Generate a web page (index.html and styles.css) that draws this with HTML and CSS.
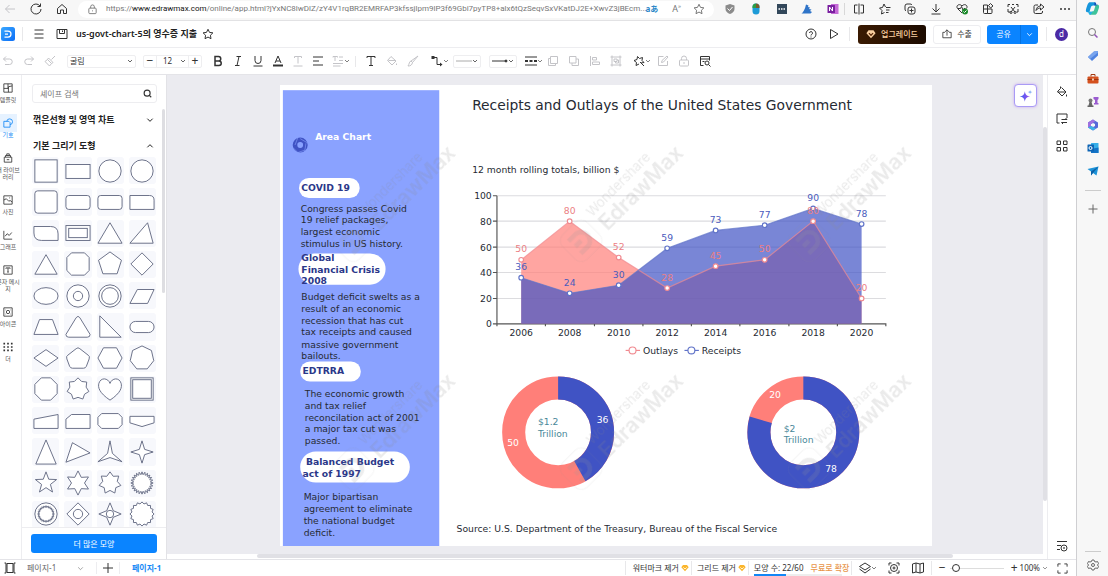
FILE: index.html
```html
<!DOCTYPE html>
<html lang="ko">
<head>
<meta charset="utf-8">
<title>EdrawMax Online</title>
<link rel="stylesheet" href="styles.css">
</head>
<body>
<svg class="sprite" aria-hidden="true">
  <symbol id="down" viewBox="0 0 24 24"><path d="M4 8l8 8 8-8"/></symbol>
  <symbol id="star" viewBox="0 0 24 24"><path d="M12 2.5l3 6.3 6.8.9-5 4.8 1.2 6.9-6-3.3-6 3.3 1.200-6.900-5-4.800 6.800-.9z"/></symbol>
  <symbol id="gem" viewBox="0 0 24 24"><path class="gem-body" d="M6 3h12l5 7-11 12L1 10z"/><path class="gem-mark" d="M7 10l5 5 5-5"/></symbol>
  <symbol id="brush" viewBox="0 0 24 24"><path d="M22 2L11 15l-3-3zM2 22c5 0 8-2 9-7l-3-3c-4 1-3 6-6 10z"/></symbol>
  <symbol id="watermark" viewBox="-50 -50 300 100" overflow="visible">
    <rect class="wm-frame" x="-30" y="-30" width="60" height="60" rx="15"/>
    <path class="wm-logo" d="M-16-15H0a15 15 0 0 1 0 30h-16M-14 0H0"/>
    <text class="wm-small" x="42" y="-15">Wondershare</text>
    <text class="wm-big" x="44" y="21">EdrawMax</text>
  </symbol>
</svg>

<div class="window">
  <header class="browser">
    <nav class="browser-nav">
      <button class="icon faded" aria-label="Back"><svg viewBox="0 0 24 24"><path d="M22 12H3m8-8l-8 8 8 8"/></svg></button>
      <button class="icon" aria-label="Reload"><svg viewBox="0 0 24 24"><path d="M20 6a10 10 0 1 0 2 6M21 1v6h-6"/></svg></button>
      <button class="icon" aria-label="Home"><svg viewBox="0 0 24 24"><path d="M3 11l9-8 9 8v10h-6v-7H9v7H3z"/></svg></button>
    </nav>
    <div class="address">
      <svg viewBox="0 0 24 24"><rect x="4" y="9" width="16" height="12" rx="2"/><path d="M8 9V6a4 4 0 0 1 8 0v3M12 14v2"/></svg>
      <span class="url">https://<b>www.edrawmax.com</b>/online/app.html?jYxNC8lwDlZ/zY4V1rqBR2EMRFAP3kfssjlpm9lP3f69Gbi7pyTP8+alx6tQzSeqvSxVKatDJ2E+XwvZ3jBEcm...</span>
      <span class="translate">aあ</span>
      <span class="reader">A<sup>»</sup></span>
      <button class="icon soft" aria-label="Favorite"><svg><use href="#star"/></svg></button>
    </div>
    <div class="extensions">
      <svg viewBox="0 0 24 24"><path d="M12 2l9 3v7c0 5-4 8-9 10-5-2-9-5-9-10V5z" fill="#8b8b8b" stroke="none"/><path d="M7 11l4 4 6-7" stroke="#fff"/></svg>
      <svg viewBox="0 0 24 24"><rect x="5" y="1" width="14" height="22" rx="7" fill="#1d9bd7" stroke="none"/><path d="M5 10V8a7 7 0 0 1 7-7v9z" fill="#2a9e45" stroke="none"/><path d="M12 1a7 7 0 0 1 7 7v2h-7z" fill="#7b5a2c" stroke="none"/></svg>
      <svg viewBox="0 0 24 24"><rect x="2" y="2" width="20" height="20" fill="#32475a" stroke="none"/><path d="M5 12h14" stroke="#fff" stroke-width="3" stroke-dasharray="3 2"/></svg>
      <svg viewBox="0 0 24 24"><path d="M1 21c3-2 7-8 9-18l5 2-1 3 4 1-2 3 5 1-3 3 4 2-3 3z" fill="#2f74c8" stroke="none"/></svg>
      <svg viewBox="0 0 24 24"><rect x="8" y="2" width="15" height="20" fill="#c56ad6" stroke="none"/><rect x="1" y="4" width="15" height="16" rx="1" fill="#7a1fa0" stroke="none"/><path d="M5 16V8l6 8V8" stroke="#fff"/></svg>
      <svg class="after-rule" viewBox="0 0 24 24"><path d="M9 4H3v16h6M15 4h6v16h-6M12 1v22"/></svg>
      <svg viewBox="0 0 24 24"><path d="M13 8L10 2 7 9l-6 1 5 5-1 7 6-3M14 9h9M14 14h7M14 19h5"/></svg>
      <svg viewBox="0 0 24 24"><rect x="8" y="8" width="14" height="14" rx="4"/><path d="M15 11v8M11 15h8M4 16a4 4 0 0 1-2-4V6a4 4 0 0 1 4-4h6a4 4 0 0 1 4 2"/></svg>
      <svg viewBox="0 0 24 24"><path d="M12 2v15m-7-6l7 7 7-7M3 22h18"/></svg>
      <svg viewBox="0 0 24 24"><path d="M12 20L3 11C-1 5 7 0 12 6c5-6 13-1 9 5M4 11h5l2-4 3 7 2-3h3"/><circle cx="18" cy="17" r="6" fill="#1c8a2b" stroke="none"/><path d="M15 17l2 2 4-4" stroke="#fff"/></svg>
      <svg viewBox="0 0 24 24"><path d="M3 4h8v17H5a2 2 0 0 1-2-2zM3 12h17v7a2 2 0 0 1-2 2h-7M17 1l5 5-5 4-4-5z"/></svg>
      <svg viewBox="0 0 24 24"><path d="M6 3H2v5M10 3h4M18 3h4v5M2 12v6h5M22 12v6h-3M8 8l8 10M16 8L8 18"/><circle cx="8" cy="19" r="2"/><circle cx="16" cy="19" r="2"/></svg>
      <svg viewBox="0 0 24 24"><path d="M10 4H5a3 3 0 0 0-3 3v11a3 3 0 0 0 3 3h11a3 3 0 0 0 3-3v-2M15 2l7 6-7 6v-4c-4 0-6 1-9 5 1-6 4-9 9-9z"/></svg>
      <svg viewBox="0 0 24 24"><g fill="#333" stroke="none"><circle cx="4" cy="12" r="2"/><circle cx="12" cy="12" r="2"/><circle cx="20" cy="12" r="2"/></g></svg>
    </div>
  </header>

  <div class="app">
    <header class="titlebar">
      <svg class="logo" viewBox="0 0 28 28"><defs><linearGradient id="lg" x1="0" x2="1" y1="0" y2="1"><stop stop-color="#3aa8ff"/><stop offset="1" stop-color="#0b6df6"/></linearGradient></defs><rect width="28" height="28" rx="5" fill="url(#lg)"/><path d="M7 8h7a6 6 0 0 1 0 12H7M8 14h6" fill="none" stroke="#fff" stroke-width="2.500"/></svg>
      <i class="rule"></i>
      <button class="icon" aria-label="Menu"><svg viewBox="0 0 24 24"><path d="M3 4h18M3 12h18M3 20h18"/></svg></button>
      <button class="icon" aria-label="Save"><svg viewBox="0 0 24 24"><path d="M2 3h20v18H2zM7 3v8h10V3M13 5v3"/></svg></button>
      <h1>us-govt-chart-5의 영수증 지출</h1>
      <button class="icon" aria-label="Star"><svg><use href="#star"/></svg></button>
      <div class="title-actions">
        <button class="icon" aria-label="Help"><svg viewBox="0 0 24 24"><circle cx="12" cy="12" r="10"/><path d="M9 10a3 3 0 1 1 4 3c-1 0-1 1-1 2M12 17v2"/></svg></button>
        <button class="icon" aria-label="Present"><svg viewBox="0 0 24 24"><path d="M5 3l15 9-15 9z"/></svg></button>
        <i class="rule"></i>
        <button class="btn upgrade"><svg><use href="#gem"/></svg>업그레이드</button>
        <button class="btn export"><svg viewBox="0 0 24 24"><path d="M7 8H2v13h20V8h-5M12 16V2M7 7l5-5 5 5"/></svg>수출</button>
        <div class="share"><button>공유</button><button aria-label="Share options"><svg><use href="#down"/></svg></button></div>
        <i class="rule"></i>
        <button class="avatar">d</button>
      </div>
    </header>

    <div class="toolbar">
      <div class="tools history">
        <button class="icon faded" aria-label="Undo"><svg viewBox="0 0 24 24"><path d="M8 3L3 8l5 5M3 8h12a5 5 0 0 1 0 11H6"/></svg></button>
        <button class="icon faded" aria-label="Redo"><svg viewBox="0 0 24 24"><path d="M16 3l5 5-5 5M21 8H9a5 5 0 0 0 0 11h9"/></svg></button>
        <button class="icon faded" aria-label="Format painter"><svg viewBox="0 0 24 24"><path d="M22 2l-7 7M9 6l9 9-3 2-8-8zM7 9l-5 4 9 9 4-5"/></svg></button>
      </div>
      <label class="field font"><select aria-label="Font"><option>굴림</option></select><svg><use href="#down"/></svg></label>
      <div class="field size"><button aria-label="Smaller">−</button><label><select aria-label="Font size"><option>12</option></select><svg><use href="#down"/></svg></label><button aria-label="Larger">+</button></div>
      <div class="tools text">
        <button class="icon" aria-label="Bold"><svg viewBox="0 0 24 24"><path d="M6 3h7a4 4 0 0 1 0 9H6zM6 12h8a4 4 0 0 1 0 9H6z" stroke-width="3"/></svg></button>
        <button class="icon" aria-label="Italic"><svg viewBox="0 0 24 24"><path d="M9 3h9M6 21h9M14 3l-4 18"/></svg></button>
        <button class="icon" aria-label="Underline"><svg viewBox="0 0 24 24"><path d="M6 2v9a6 6 0 0 0 12 0V2M3 22h18"/></svg></button>
        <button class="icon" aria-label="Text colour"><svg viewBox="0 0 24 24"><path d="M6 16l6-14 6 14M8 12h8"/><path d="M2 21h20" stroke-width="4"/></svg></button>
        <button class="icon faded" aria-label="Text case"><svg viewBox="0 0 24 24"><path d="M5 6V3h14v3M12 3v14M3 22h18"/></svg></button>
        <button class="icon" aria-label="Align"><svg viewBox="0 0 24 24"><path d="M2 4h20M2 12h12M2 20h20"/></svg></button>
        <button class="icon faded drop" aria-label="Line spacing"><svg viewBox="0 0 24 24"><path d="M2 5V3h9v2M6 3v9M14 4h8M14 11h8M2 17h20M2 22h15"/></svg><svg class="chev"><use href="#down"/></svg></button>
      </div>
      <i class="rule"></i>
      <div class="tools style">
        <button class="icon" aria-label="Text"><svg viewBox="0 0 24 24"><path d="M4 6V3h16v3M12 3v18M8 21h8"/></svg></button>
        <button class="icon faded" aria-label="Fill"><svg viewBox="0 0 24 24"><path d="M10 3l10 9-8 8-9-9zM5 11h14M21 17v3"/></svg></button>
        <button class="icon faded" aria-label="Line colour"><svg><use href="#brush"/></svg></button>
        <button class="icon drop connector" aria-label="Connector"><svg viewBox="0 0 24 24"><path d="M4 5h8v14h9"/><path d="M1 2h6v6H1zM18 15l5 4-5 4z" fill="currentColor" stroke="none"/></svg><svg class="chev"><use href="#down"/></svg></button>
        <button class="field line" aria-label="Line type"><svg viewBox="0 0 32 24"><path d="M0 12h32" stroke="#aaa"/></svg><svg class="chev"><use href="#down"/></svg></button>
        <button class="field line" aria-label="Arrow type"><svg viewBox="0 0 32 24"><path d="M0 12h28"/><circle cx="28" cy="12" r="2" fill="currentColor"/></svg><svg class="chev"><use href="#down"/></svg></button>
        <button class="icon drop" aria-label="Line weight"><svg viewBox="0 0 24 24"><path d="M0 4h24M0 20h24"/><path d="M0 12h24" stroke-width="4" stroke-dasharray="6 3"/></svg><svg class="chev"><use href="#down"/></svg></button>
      </div>
      <div class="tools arrange">
        <button class="icon faded" aria-label="Bring forward"><svg viewBox="0 0 24 24"><path d="M7 3h14v14H7zM7 7H3v14h14v-4"/></svg></button>
        <button class="icon faded" aria-label="Send backward"><svg viewBox="0 0 24 24"><path d="M3 3h13v13H3zM8 16v5h13V8h-5"/></svg></button>
        <button class="icon faded" aria-label="Align shapes"><svg viewBox="0 0 24 24"><path d="M3 2v20M7 5h8v5H7zM7 14h14v5H7z"/></svg></button>
        <button class="icon faded" aria-label="Group"><svg viewBox="0 0 24 24"><path d="M4 4h16v16H4zM8 8h6v5H8zM11 13v3h6v-6h-3M1 4h3V1M20 1v3h3M1 20h3v3M20 23v-3h3"/></svg></button>
        <button class="icon drop" aria-label="Effects"><svg viewBox="0 0 24 24"><path d="M9 3l4 4 6-2-1 6 4 4-6 1M9 3L8 9l-6 2 5 4-1 6 6-3M14 14l8 8"/></svg><svg class="chev"><use href="#down"/></svg></button>
        <button class="icon faded" aria-label="Edit"><svg viewBox="0 0 24 24"><path d="M13 3H3v18h18v-9M9 15l1-4 10-9 2 2-9 10z"/></svg></button>
        <button class="icon faded" aria-label="Lock"><svg viewBox="0 0 24 24"><rect x="3" y="10" width="18" height="12" rx="2"/><path d="M7 10V7a5 5 0 0 1 10 0v3M12 14v4"/></svg></button>
        <button class="icon" aria-label="Find"><svg viewBox="0 0 24 24"><path d="M9 21H3V3h18v8M3 8h18M7 13h4"/><circle cx="16" cy="16" r="4"/><path d="M19 19l4 4"/></svg></button>
      </div>
    </div>

    <div class="workspace">
      <nav class="rail">
        <button><svg viewBox="0 0 24 24"><path d="M2 2h20v20H2zM2 13h11M13 22V9l9-2M12 2v11"/></svg><span>템플릿</span></button>
        <button class="active"><svg viewBox="0 0 24 24"><path d="M9 8a7 7 0 1 1 8 8"/><path d="M2 8h12l3 3v11H2z"/></svg><span>기호</span></button>
        <button><svg viewBox="0 0 24 24"><path d="M3 10h18v12H3zM6 10V6h12v4M9 6V2h6v4M9 16h6"/></svg><span>내 라이브<br>러리</span></button>
        <button><svg viewBox="0 0 24 24"><path d="M2 2h20v20H2zM2 12l6-3 6 6 3-2 5 4M15 7h2"/></svg><span>사진</span></button>
        <button><svg viewBox="0 0 24 24"><path d="M2 2v20h20M5 15l5-6 5 4 6-7"/></svg><span>그래프</span></button>
        <button><svg viewBox="0 0 24 24"><path d="M2 2h20v20H2zM7 9V7h10v2M12 7v10M10 17h4"/></svg><span>문자 메시<br>지</span></button>
        <button><svg viewBox="0 0 24 24"><path d="M2 2h20v20H2zM6 7h1M17 7h1M6 17h1M17 17h1"/><circle cx="12" cy="12" r="4"/></svg><span>아이콘</span></button>
        <button><svg viewBox="0 0 24 24"><path d="M1 4h22M1 12h22M1 20h22" stroke-width="4" stroke-dasharray="4 5"/></svg><span>더</span></button>
      </nav>

      <aside class="library">
        <label class="search"><input type="text" placeholder="셰이프 검색" aria-label="셰이프 검색"><svg viewBox="0 0 24 24"><circle cx="11" cy="11" r="8"/><path d="M17 17l5 5"/></svg></label>
        <button class="section">꺾은선형 및 영역 차트<svg><use href="#down"/></svg></button>
        <button class="section open">기본 그리기 도형<svg><use href="#down"/></svg></button>
        <div class="shapes" id="shapes"></div>
        <div class="library-foot"><button>더 많은 모양</button></div>
        <i class="library-scroll"></i>
      </aside>

      <main class="stage">
        <div class="canvas">
          <svg class="page" viewBox="0 0 1130 799">
            <rect class="band" x="5" y="9" width="271" height="790"/>
            <circle cx="35" cy="104" r="9" fill="none" stroke="#4053c4" stroke-width="8"/>
            <path d="M31 91l-5 13M47 100l-12-7M43 114l2-13M31 117l12-4M22 108l9 9" stroke="#8aa2ff" stroke-width="1"/>
            <text class="head white" x="61" y="96">Area Chart</text>

            <rect class="pill" x="33" y="161" width="105" height="35" rx="17"/>
            <text class="head" x="37" y="184">COVID 19</text>
            <text><tspan x="36" y="220">Congress passes Covid</tspan><tspan x="36" y="240">19 relief packages,</tspan><tspan x="36" y="260">largest economic</tspan><tspan x="36" y="281">stimulus in US history.</tspan></text>

            <rect class="pill" x="32" y="292" width="151" height="54" rx="27"/>
            <text class="head"><tspan x="37" y="305">Global</tspan><tspan x="37" y="325">Financial Crisis</tspan><tspan x="37" y="345">2008</tspan></text>
            <text><tspan x="37" y="373">Budget deficit swelts as a</tspan><tspan x="37" y="394">result of an economic</tspan><tspan x="37" y="414">recession that has cut</tspan><tspan x="37" y="434">tax receipts and caused</tspan><tspan x="37" y="455">massive government</tspan><tspan x="37" y="475">bailouts.</tspan></text>

            <rect class="pill" x="35" y="479" width="105" height="35" rx="17"/>
            <text class="head" x="39" y="501">EDTRRA</text>
            <text><tspan x="43" y="541">The economic growth</tspan><tspan x="43" y="561">and tax relief</tspan><tspan x="43" y="582">reconcilation act of 2001</tspan><tspan x="43" y="602">a major tax cut was</tspan><tspan x="43" y="623">passed.</tspan></text>

            <rect class="pill" x="35" y="635" width="190" height="54" rx="27"/>
            <text class="head"><tspan x="45" y="659">Balanced Budget</tspan><tspan x="39" y="679">act of 1997</tspan></text>
            <text><tspan x="41" y="719">Major bipartisan</tspan><tspan x="41" y="740">agreement to eliminate</tspan><tspan x="41" y="760">the national budget</tspan><tspan x="41" y="781">deficit.</tspan></text>

            <text class="title" x="333" y="44">Receipts and Outlays of the United States Government</text>
            <text x="333" y="152">12 month rolling totals, billion $</text>

            <path class="grid" d="M376 192h674M376 236h674M376 281h674M376 325h674M376 370h674"/>
            <path class="axis" d="M376 192v226M369 192h7M369 236h7M369 281h7M369 325h7M369 370h7M369 414h681v4M460 414v4M545 414v4M629 414v4M713 414v4M797 414v4M882 414v4M966 414v4"/>
            <g class="end"><text x="367" y="198">100</text><text x="367" y="242">80</text><text x="367" y="287">60</text><text x="367" y="331">40</text><text x="367" y="376">20</text><text x="367" y="420">0</text></g>
            <g class="mid"><text x="418" y="435">2006</text><text x="502" y="435">2008</text><text x="587" y="435">2010</text><text x="671" y="435">2012</text><text x="755" y="435">2014</text><text x="840" y="435">2016</text><text x="924" y="435">2018</text><text x="1008" y="435">2020</text></g>

            <path d="M418 303L502 236 587 299 671 352 755 314 840 303 924 236 1008 370V414H418z" fill="#ff7f79" fill-opacity=".7"/>
            <path d="M418 334L502 361 587 347 671 283 755 252 840 243 924 214 1008 241V414H418z" fill="#4053c4" fill-opacity=".7"/>
            <path class="line red soft-line" d="M418 303L502 236 587 299 671 352 755 314 840 303 924 236 1008 370"/>
            <path class="line blue soft-line" d="M418 334L502 361 587 347 671 283 755 252 840 243 924 214 1008 241"/>
            <g class="dot blue"><circle cx="418" cy="334" r="4"/><circle cx="502" cy="361" r="4"/><circle cx="587" cy="347" r="4"/><circle cx="671" cy="283" r="4"/><circle cx="755" cy="252" r="4"/><circle cx="840" cy="243" r="4"/><circle cx="924" cy="214" r="4"/><circle cx="1008" cy="241" r="4"/></g>
            <g class="dot red"><circle cx="418" cy="303" r="4"/><circle cx="502" cy="236" r="4"/><circle cx="587" cy="299" r="4"/><circle cx="671" cy="352" r="4"/><circle cx="755" cy="314" r="4"/><circle cx="840" cy="303" r="4"/><circle cx="924" cy="236" r="4"/><circle cx="1008" cy="370" r="4"/></g>
            <g class="mid value-red"><text x="418" y="290">50</text><text x="502" y="223">80</text><text x="587" y="286">52</text><text x="671" y="339">28</text><text x="755" y="301">45</text><text x="840" y="290">50</text><text x="924" y="223">80</text><text x="1008" y="357">20</text></g>
            <g class="mid value-blue"><text x="418" y="321">36</text><text x="502" y="348">24</text><text x="587" y="334">30</text><text x="671" y="270">59</text><text x="755" y="239">73</text><text x="840" y="230">77</text><text x="924" y="201">90</text><text x="1008" y="228">78</text></g>

            <path class="line red" d="M599 460h25"/><g class="dot red"><circle cx="611" cy="460" r="6"/></g><text x="629" y="466">Outlays</text>
            <path class="line blue" d="M701 460h25"/><g class="dot blue"><circle cx="713" cy="460" r="6"/></g><text x="731" y="466">Receipts</text>

            <g class="donut">
              <circle cx="482" cy="602" r="77" stroke="#ff7f79"/>
              <circle cx="482" cy="602" r="77" stroke="#4053c4" pathLength="86" stroke-dasharray="36 50" transform="rotate(-90 482 602)"/>
              <circle cx="907" cy="602" r="77" stroke="#ff7f79"/>
              <circle cx="907" cy="602" r="77" stroke="#4053c4" pathLength="98" stroke-dasharray="78 20" transform="rotate(-90 907 602)"/>
            </g>
            <g class="mid white"><text x="559" y="586">36</text><text x="404" y="626">50</text><text x="858" y="542">20</text><text x="955" y="670">78</text></g>
            <text class="teal"><tspan x="447" y="590">$1.2</tspan><tspan x="447" y="610">Trillion</tspan></text>
            <text class="teal"><tspan x="873" y="601">$2</tspan><tspan x="873" y="620">Trillion</tspan></text>
            <text x="306" y="775">Source: U.S. Department of the Treasury, Bureau of the Fiscal Service</text>

            <g class="marks">
              <use href="#watermark" width="300" height="100" transform="translate(127 270) rotate(-45) translate(-50 -50)"/>
              <use href="#watermark" width="300" height="100" transform="translate(522 270) rotate(-45) translate(-50 -50)"/>
              <use href="#watermark" width="300" height="100" transform="translate(917 270) rotate(-45) translate(-50 -50)"/>
              <use href="#watermark" width="300" height="100" transform="translate(127 665) rotate(-45) translate(-50 -50)"/>
              <use href="#watermark" width="300" height="100" transform="translate(522 665) rotate(-45) translate(-50 -50)"/>
              <use href="#watermark" width="300" height="100" transform="translate(917 665) rotate(-45) translate(-50 -50)"/>
            </g>
          </svg>
          <button class="assistant" aria-label="AI"><svg viewBox="0 0 24 24"><defs><linearGradient id="ai"><stop stop-color="#3b62f0"/><stop offset="1" stop-color="#a04cf0"/></linearGradient></defs><path d="M10 4c1 6 3 8 9 9-6 1-8 3-9 9-1-6-3-8-9-9 6-1 8-3 9-9z" fill="url(#ai)"/><path d="M19 1c0 3 1 4 4 4-3 1-4 2-4 5 0-3-1-4-4-5 3 0 4-1 4-4z" fill="#8db4f5"/></svg></button>
        </div>
        <div class="vscroll"><i></i></div>
        <div class="hscroll"><i></i></div>
      </main>

      <aside class="props">
        <button class="icon" aria-label="Fill panel"><svg viewBox="0 0 24 24"><path d="M11 3l9 9-8 8-9-9 6-6V1M3 12h17M21 17v4"/></svg></button>
        <button class="icon" aria-label="Page panel"><svg viewBox="0 0 24 24"><path d="M22 10V2H2v18h5M11 13h11l-3-3M22 19H11l3 3"/></svg></button>
        <button class="icon" aria-label="Grid panel"><svg viewBox="0 0 24 24"><path d="M2 2h7v7H2zM15 2h7v7h-7zM2 15h7v7H2zM15 15h7v7h-7z"/></svg></button>
        <button class="icon last" aria-label="View options"><svg viewBox="0 0 24 24"><path d="M2 3h20M2 11h8M2 19h6"/><circle cx="16" cy="16" r="6"/><circle cx="16" cy="16" r="1"/></svg></button>
      </aside>
    </div>

    <footer class="status">
      <button class="icon pages" aria-label="Pages"><svg viewBox="0 0 24 24"><path d="M6 3h12v18H6zM1 2h3v20H1M23 2h-3v20h3"/></svg></button>
      <label class="page-select"><select aria-label="Page"><option>페이지-1</option></select><svg><use href="#down"/></svg></label>
      <button class="icon add" aria-label="Add page"><svg viewBox="0 0 24 24"><path d="M12 2v20M2 12h20"/></svg></button>
      <button class="tab">페이지-1</button>
      <div class="status-right">
        <button class="cell">워터마크 제거<svg><use href="#gem"/></svg></button>
        <button class="cell">그리드 제거<svg><use href="#gem"/></svg></button>
        <div class="cell quota"><span>모양 수: 22/60</span><a href="#">무료로 확장</a><i class="bar"><i></i></i></div>
        <div class="cell views">
          <button class="icon drop" aria-label="Layers"><svg viewBox="0 0 24 24"><path d="M12 2l11 7-11 7L1 9zM1 14l11 8 11-8"/></svg><svg class="chev"><use href="#down"/></svg></button>
          <button class="icon" aria-label="Focus"><svg viewBox="0 0 24 24"><path d="M2 7V2h5M17 2h5v5M22 17v5h-5M7 22H2v-5"/><circle cx="12" cy="12" r="7"/><circle cx="12" cy="12" r="2"/></svg></button>
          <button class="icon" aria-label="Map"><svg viewBox="0 0 24 24"><path d="M1 4l7-2 8 2 7-2v18l-7 2-8-2-7 2zM8 2v18M16 4v18"/></svg></button>
        </div>
        <div class="cell zoom">
          <button aria-label="Zoom out">−</button>
          <input type="range" min="0" max="100" value="6" aria-label="Zoom">
          <button aria-label="Zoom in">+</button>
          <button>100%<svg><use href="#down"/></svg></button>
          <button class="icon" aria-label="Full screen"><svg viewBox="0 0 24 24"><path d="M2 8V2h6M16 2h6v6M22 16v6h-6M8 22H2v-6"/></svg></button>
        </div>
      </div>
    </footer>
  </div>
</div>

<aside class="edge">
  <svg class="copilot" viewBox="0 0 24 24"><path d="M8 2h7c2 0 2 2 3 5h-5c-2 0-3 1-4 4l-2 7H4c-3 0-3-3-2-6 2-6 3-10 6-10z" fill="#1796dc"/><path d="M16 22H9c-2 0-2-2-3-5h5c2 0 3-1 4-4l2-7h3c3 0 3 3 2 6-2 6-3 10-6 10z" fill="#3fc39a"/><path d="M15 2c2 0 3 1 3 4h3l-3 1-3 0z" fill="#154fb8"/><path d="M9 22c-2 0-3-1-4-5h6l2-1z" fill="#23b0e8"/></svg>
  <svg viewBox="0 0 24 24"><circle cx="10" cy="10" r="7" fill="none" stroke="#777" stroke-width="2"/><path d="M15 15l6 6" stroke="#9153b8" stroke-width="3"/></svg>
  <svg viewBox="0 0 24 24"><path d="M2 14L14 3l8-1v9L10 22z" fill="#4f83e0"/><path d="M2 14l4 4L22 5V2l-8 1z" fill="#79a5ee"/></svg>
  <svg viewBox="0 0 24 24"><path d="M8 7V3h8v4" fill="none" stroke="#a23a12" stroke-width="2"/><rect x="1" y="7" width="22" height="14" rx="2" fill="#d4511e"/><path d="M1 13h22" stroke="#9c3510" stroke-width="2"/><path d="M10 11h4v4h-4z" fill="#f5c6a8"/></svg>
  <svg viewBox="0 0 24 24"><circle cx="7" cy="9" r="4" fill="#777"/><path d="M5 12h4l2 7h2v3H1v-3h2z" fill="#666"/><path d="M13 2h10v4l-2 2v6h2v3h-9v-3h2V8l-3-2z" fill="#9a5cd0"/></svg>
  <svg viewBox="0 0 24 24"><path d="M12 1l10 6v10l-10 6L2 17V7zM12 8l-4 2v4l4 2 4-2v-4z" fill="#5668d8" fill-rule="evenodd"/><path d="M12 1L2 7v10l6-3v-4l8-5z" fill="#a06fe0"/><path d="M2 17l10 6 6-4-6-3-4-2z" fill="#3fb0e5"/></svg>
  <svg viewBox="0 0 24 24"><rect x="8" y="2" width="15" height="20" rx="1" fill="#35aee8"/><path d="M8 14l15-3v11H8z" fill="#1373c6"/><rect x="1" y="5" width="13" height="14" rx="1" fill="#0d64b4"/><circle cx="7" cy="12" r="3" fill="none" stroke="#fff" stroke-width="2"/></svg>
  <svg viewBox="0 0 24 24"><path d="M1 8l22-5-4 18-7-5-4 5v-8z" fill="#1d93d8"/><path d="M8 13l15-10-11 13-4 5z" fill="#0c5fa6"/></svg>
  <hr>
  <button class="icon" aria-label="Add"><svg viewBox="0 0 24 24"><path d="M12 3v18M3 12h18"/></svg></button>
  <hr class="push">
  <button class="icon" aria-label="Settings"><svg viewBox="0 0 24 24"><circle cx="12" cy="12" r="3"/><path d="M10 2h4l1 3 3 1 3-1 2 4-2 3 2 3-2 4-3-1-3 1-1 3h-4l-1-3-3-1-3 1-2-4 2-3-2-3 2-4 3 1 3-1z"/></svg></button>
</aside>
<script src="shapes.js"></script>
</body>
</html>
```
FILE: styles.css
```css
* { box-sizing: border-box; }
body {
  margin: 0;
  height: 100vh;
  display: flex;
  overflow: hidden;
  background: #f7f7f7;
  color: #333;
  font: 8px/12px "Noto Sans", "Noto Sans CJK KR", sans-serif;
}
button, select, input { font: inherit; color: inherit; margin: 0; padding: 0; border: 0; background: none; }
button { display: inline-flex; align-items: center; justify-content: center; white-space: nowrap; }
select { appearance: none; min-width: 0; flex: 1; }
svg { display: block; fill: none; stroke: currentColor; stroke-width: 2; width: 12px; height: 12px; flex: none; }
.sprite { position: absolute; width: 0; height: 0; }
.icon { width: 12px; height: 12px; flex: none; }
.icon svg { width: 12px; height: 12px; }
.faded { color: #c4c4c8; }
.soft { color: #777; }
.drop { width: 18px; justify-content: flex-start; }
.drop .chev { color: #555; }
svg.chev, .icon .chev { width: 6px; height: 6px; stroke-width: 3; }
.rule { width: 1px; height: 14px; background: #e8e8ea; flex: none; }

.window { flex: 1; min-width: 0; display: flex; flex-direction: column; }

/* browser chrome */
.browser { height: 20px; display: flex; align-items: center; padding: 0 5px 2px 4px; flex: none; }
.browser-nav { display: flex; gap: 14px; width: 74px; }
.address { flex: 1; min-width: 0; height: 17px; background: #fff; border-radius: 9px; display: flex; align-items: center; padding: 0 9px; color: #777; }
.address > svg { width: 11px; height: 11px; margin: 0 8px 0 0; }
.url { flex: 1; min-width: 0; white-space: nowrap; font-family: Roboto, sans-serif; }
.url b { font-weight: 400; color: #111; }
.translate { color: #2a87c8; font-weight: 700; margin-right: 14px; }
.reader { margin-right: 12px; font-size: 9px; }
.reader sup { font-size: 6px; line-height: 6px; }
.extensions { width: 347px; margin-left: 10px; display: flex; justify-content: space-between; }
.after-rule { overflow: visible; box-shadow: -8px 0 0 #f7f7f7, -9px 0 0 #d8d8d8; }

/* right browser sidebar */
.edge { width: 32px; flex: none; border-left: 1px solid #cfcfd2; display: flex; flex-direction: column; align-items: center; gap: 11px; padding: 1px 0 5px; color: #666; }
.edge > svg { stroke: none; }
.edge .copilot { width: 15px; height: 15px; }
.edge hr { width: 16px; height: 1px; margin: 2px 0 1px; border: 0; background: #ccc; }
.edge .push { margin-top: auto; margin-bottom: -4px; }

/* app header */
.app { flex: 1; min-height: 0; display: flex; flex-direction: column; background: #fff; border-top: 1px solid #e2e2e4; }
.titlebar { height: 27px; flex: none; display: flex; align-items: center; border-bottom: 1px solid #ededf0; padding: 0 8px 0 1px; }
.logo { width: 14px; height: 14px; stroke: none; margin-right: 7px; }
.titlebar > .icon { margin-left: 10px; }
.titlebar > .rule + .icon { margin: 0 1px 0 10px; }
.titlebar h1 { margin: 0 5px 0 8px; font-size: 9px; line-height: 12px; font-weight: 600; color: #222; white-space: nowrap; }
.titlebar h1 + .icon { margin: 0; }
.title-actions { margin-left: auto; display: flex; align-items: center; gap: 8px; }
.title-actions > .icon { margin-right: 3px; }
.title-actions > .icon + .icon { margin-right: 1px; }
.btn { height: 19px; border-radius: 3px; gap: 5px; }
.btn svg { width: 10px; height: 10px; }
.upgrade { width: 68px; background: linear-gradient(90deg, #3a1a02, #1c0b00); color: #f9cfa0; font-weight: 500; --gem-mark: #5b2a0a; --gem: #f9cfa0; }
.gem-body { fill: var(--gem, #fbb52b); stroke: none; }
.gem-mark { stroke: var(--gem-mark, #fff4d0); stroke-width: 3; }
.export { width: 48px; border: 1px solid #ededf0; margin-left: -1px; }
.share { display: flex; width: 51px; height: 19px; border-radius: 3px; overflow: hidden; background: #0a84ff; color: #fff; margin-left: -2px; }
.share button { flex: 1; }
.share button + button { flex: none; width: 18px; border-left: 1px solid #0672e0; }
.share svg { width: 7px; height: 7px; stroke-width: 3; }
.avatar { width: 13px; height: 13px; border-radius: 50%; background: #4b2aa5; color: #fff; }

/* toolbar */
.toolbar { height: 27px; flex: none; display: flex; align-items: center; border-bottom: 1px solid #e4e4e8; padding-left: 2px; }
.tools { display: flex; align-items: center; gap: 9px; }
.history { width: 65px; }
.text { gap: 8px; margin-left: 10px; }
.field { height: 13px; border: 1px solid #eeeef0; border-radius: 2px; display: flex; align-items: center; }
.field svg { width: 6px; height: 6px; stroke-width: 3; }
.font { width: 69px; padding: 0 2px; }
.size { width: 59px; margin-left: 7px; }
.size button { width: 12px; font-size: 12px; line-height: 10px; }
.size label { flex: 1; display: flex; align-items: center; padding: 0 2px 0 6px; border: solid #eeeef0; border-width: 0 1px; }
.toolbar > .rule { height: 11px; margin: 0 9px 0 5px; }
.connector { margin: 0 -5px 0 3px; }
.line { width: 28px; justify-content: space-between; padding: 0 2px; margin-right: -1px; }
.line svg:first-child { width: 16px; height: 12px; stroke-width: 2; }
.arrange { margin-left: 4px; }
.arrange .drop { margin: 0 -3px 0 2px; }

/* workspace */
.workspace { flex: 1; min-height: 0; display: flex; }
.rail { width: 22px; flex: none; overflow: hidden; border-right: 1px solid #ededf0; padding-top: 5px; display: flex; flex-direction: column; align-items: flex-start; gap: 3px; }
.rail button { width: 26px; margin-left: -5px; flex-direction: column; padding: 3px 0 8px; font-size: 6px; line-height: 7px; gap: 4px; color: #555; }
.rail svg { width: 10px; height: 10px; color: #333; }
.rail .active, .rail .active svg { color: #1287f5; }
.rail .active svg { background: #e6f2ff; box-shadow: 0 0 0 4px #e6f2ff; }

.library { width: 145px; flex: none; position: relative; display: flex; flex-direction: column; border-right: 1px solid #e2e2e6; }
.search { margin: 9px 9px 7px 10px; height: 19px; border: 1px solid #ededf0; border-radius: 3px; display: flex; align-items: center; padding: 0 4px 0 7px; flex: none; }
.search input { flex: 1; min-width: 0; outline: 0; }
.search input::placeholder { color: #777; }
.search svg { width: 9px; height: 9px; stroke-width: 3; }
.section { justify-content: space-between; margin: 0 12px 0 11px; height: 20px; font-size: 9px; font-weight: 700; color: #222; flex: none; }
.section svg { width: 8px; height: 8px; stroke-width: 3; }
.section.open { margin-top: 6px; }
.open svg { transform: rotate(180deg); }
.shapes { flex: 1; min-height: 0; overflow: hidden; margin: 1px 10px 0; display: grid; grid-template-columns: repeat(4, 1fr); gap: 4px 5px; align-content: start; }
.shapes button { aspect-ratio: 1; background: #f7f8fc; border-radius: 3px; }
.shapes svg { width: 26px; height: 26px; stroke: #626982; stroke-width: 1; fill: #fff; }
.library-foot { flex: none; border-top: 1px solid #ededf0; padding: 6px 9px; }
.library-foot button { width: 100%; height: 19px; border-radius: 3px; background: #0a84ff; color: #fff; }
.library-scroll { position: absolute; right: 1px; top: 34px; width: 3px; height: 38%; border-radius: 2px; background: #dedee2; }

.stage { flex: 1; min-width: 0; display: grid; grid-template: 1fr 5px / 1fr 4px; }
.canvas { position: relative; overflow: hidden; background: #ebebf0; display: flex; justify-content: center; align-items: flex-start; padding: 10px 0 0 1px; }
.vscroll { padding: 52px 0 53px; display: flex; }
.vscroll i { width: 4px; background: #e0e0e5; border-radius: 2px; }
.hscroll { padding: 0 90px 1px; display: flex; }
.hscroll i { flex: 1; background: #e0e0e5; border-radius: 2px; }
.assistant { position: absolute; top: 9px; right: 6px; width: 23px; height: 23px; background: #fff; border: 1px solid #a99bf5; border-radius: 4px; box-shadow: 0 0 3px #c9a8f0; }
.assistant svg { stroke: none; width: 14px; height: 14px; }

/* document on the canvas, drawn in document units */
.page { width: 652px; height: auto; background: #fff; stroke: none; font-family: "DejaVu Sans", sans-serif; font-size: 16px; }
.page text { fill: #262a33; white-space: pre; }
.page .title { font-size: 24px; }
.page .head { font-weight: 700; fill: #2a3789; }
.page .white, .page .white text { fill: #fff; }
.page .teal { fill: #4a8899; }
.band { fill: #8aa2ff; }
.pill { fill: #fff; }
.grid { stroke: #dcdcdf; stroke-width: 2; }
.axis { stroke: #555; stroke-width: 2; }
.mid { text-anchor: middle; }
.end { text-anchor: end; }
.line.red, .line.blue { fill: none; stroke-width: 2; }
.page .red { stroke: #f08a90; }
.page .blue { stroke: #6073c8; }
.soft-line { opacity: .7; }
.dot { fill: #fff; stroke-width: 2; }
.page .value-red text { fill: #ec7f84; }
.page .value-blue text { fill: #4a5bbd; }
.donut { fill: none; stroke-width: 40; }
.marks { opacity: .18; }
.wm-frame { fill: none; stroke: #999; stroke-width: 1; }
.wm-logo { fill: none; stroke: #999; stroke-width: 8; }
.page .wm-small, .page .wm-big, .wm-small, .wm-big { font-family: Inter, sans-serif; fill: #8c8c8c; }
.wm-small { font-size: 23px; }
.wm-big { font-size: 37px; font-weight: 600; }

.props { width: 29px; flex: none; border-left: 1px solid #ededf0; display: flex; flex-direction: column; align-items: center; gap: 15px; padding: 11px 0 7px; }
.props .last { margin-top: auto; }

/* status bar */
.status { height: 17px; flex: none; border-top: 1px solid #e4e4e8; display: flex; align-items: center; padding: 0 8px 0 4px; }
.page-select { display: flex; align-items: center; width: 81px; height: 12px; padding: 0 12px 0 11px; border-right: 1px solid #ededf0; color: #666; }
.page-select svg { width: 7px; height: 7px; }
.add { margin: 0 5px; }
.tab { color: #1287f5; font-weight: 700; padding-left: 12px; border-left: 1px solid #ededf0; }
.status-right { margin-left: auto; display: flex; align-items: center; }
.cell { display: flex; align-items: center; border-left: 1px solid #e8e8ea; height: 14px; padding: 0 2px 0 7px; gap: 2px; }
.cell > svg { width: 8px; height: 8px; }
.cell + .cell { padding-left: 5px; }
.quota { position: relative; gap: 7px; width: 103px; white-space: nowrap; }
.quota a { color: #e8954a; text-decoration: none; font-weight: 500; }
.bar { position: absolute; left: 5px; right: 9px; bottom: -1px; height: 2px; background: #eee; }
.bar i { display: block; width: 37%; height: 100%; background: #1287f5; }
.cell.views { gap: 12px; width: 80px; padding-left: 7px; }
.views .drop { margin-right: -1px; }
.cell.zoom { padding: 0 0 0 7px; }
.zoom > button:first-child, .zoom > button:nth-child(3) { font-size: 12px; line-height: 12px; }
.zoom button svg { width: 6px; height: 6px; margin-left: 2px; }
.zoom .icon { margin-left: 6px; }
.zoom .icon svg { width: 11px; height: 11px; margin: 0; }
.zoom input { appearance: none; width: 54px; height: 8px; margin: 0 5px 0 2px; background: linear-gradient(#ddd, #ddd) center / 100% 1px no-repeat; }
.zoom input::-webkit-slider-thumb { appearance: none; width: 8px; height: 8px; border: 1px solid #333; border-radius: 50%; background: #fff; }
```
FILE: shapes.js
```js
// Regular star or polygon around the centre of a 28-unit cell.
function star(points, outer, inner, turn = 0) {
  const out = [];
  const steps = inner === undefined ? points : points * 2;
  for (let i = 0; i < steps; i++) {
    const r = inner !== undefined && i % 2 ? inner : outer;
    const a = (i / steps) * Math.PI * 2 - Math.PI / 2 + turn;
    out.push((14 + r * Math.cos(a)).toFixed(2) + "," + (14 + r * Math.sin(a)).toFixed(2));
  }
  return `<polygon points="${out.join(" ")}"/>`;
}
const path = d => `<path d="${d}"/>`;
const rect = (x, y, w, h, r = 0) => `<rect x="${x}" y="${y}" width="${w}" height="${h}" rx="${r}"/>`;
const circle = r => `<circle cx="14" cy="14" r="${r}"/>`;

const shapes = [
  rect(2, 2, 24, 24), rect(1, 7, 26, 15), circle(12), circle(12),
  rect(2, 2, 24, 24, 3), rect(1, 7, 26, 15, 3), rect(1, 7, 26, 15, 3), path("M1 7h21q5 0 5 5v10H1z"),
  path("M1 7h18q8 0 8 8v7H9q-8 0-8-8z"), rect(1, 6, 26, 16) + rect(4, 9, 20, 10), path("M14 3l13 22H1z"), path("M20 3l6 22H1z"),
  path("M14 4l12 21H2z"), path("M7 2h14l5 5v14l-5 5H7l-5-5V7z"), star(5, 13), path("M14 2l12 12-12 12L2 14z"),
  '<ellipse cx="14" cy="14" rx="13" ry="9"/>', circle(12) + circle(5), circle(12) + circle(9), path("M9 7h18l-7 15H1z"),
  path("M7 6h14l6 16H1z"), path("M12 4q2-3 4 0l11 18q0 3-3 3H4q-3 0-3-3z"), path("M3 2v23h23z"), rect(1, 8, 26, 12, 6),
  path("M14 5l13 9-13 9L1 14z"), path("M12 4q2-2 4 0l9 7q2 1 1 4l-3 8q-1 2-3 2H8q-2 0-3-2l-3-8q-1-3 1-4z"), path("M7 3h14l6 11-6 11H7L1 14z"), star(7, 13),
  path("M9 2h10l7 7v10l-7 7H9l-7-7V9z"), star(7, 12, 9), path("M14 26C2 18 1 12 2 8c2-7 10-6 12 0 2-6 10-7 12 0 1 4 0 10-12 18z"), rect(2, 2, 24, 24) + rect(4, 4, 20, 20),
  path("M1 12l26-5v15H1z"), path("M7 7h20v15H1V12z"), path("M5 6h18l4 4v8l-4 4H5l-4-4v-8z"), path("M1 9h26v7l-13 4-13-4z"),
  path("M14 1l11 26H3z"), path("M8 4l19 11L1 25z"), star(3, 15, 3).replace("<polygon", '<polygon transform="translate(0 3)"'), star(4, 12, 4),
  star(5, 12, 5), star(6, 13, 7), star(7, 12, 8), star(24, 12, 9),
  circle(12) + star(24, 9, 7), star(4, 12) + circle(5), star(4, 12, 5) + circle(4), star(16, 13, 11)
];

document.getElementById("shapes").innerHTML = shapes
  .map((s, i) => `<button aria-label="Shape ${i + 1}"><svg viewBox="0 0 28 28">${s}</svg></button>`)
  .join("");
```
